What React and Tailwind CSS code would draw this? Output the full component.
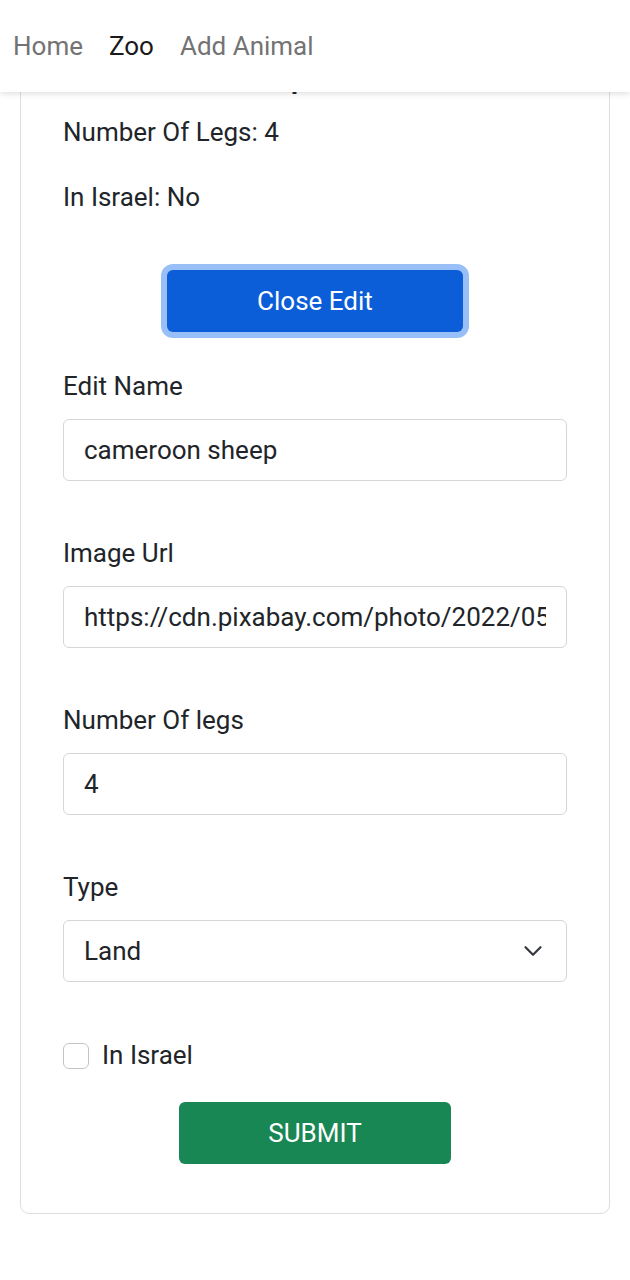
import { useState } from "react";

const fields = [
  { label: "Edit Name", value: "cameroon sheep" },
  { label: "Image Url", value: "https://cdn.pixabay.com/photo/2022/05/12/sheep-7191044_1280.jpg" },
  { label: "Number Of legs", value: "4" },
];

function NavBar() {
  const links = ["Home", "Zoo", "Add Animal"];
  return (
    <nav className="relative z-10 h-[92px] bg-white shadow-[0_2px_6px_rgba(0,0,0,0.12)] flex items-center">
      {links.map((l) => (
        <a
          key={l}
          href="#"
          className={`px-[13px] text-[26px] leading-none ${
            l === "Zoo" ? "text-[#1a1a1a]" : "text-[#737373]"
          }`}
        >
          {l}
        </a>
      ))}
    </nav>
  );
}

export default function App() {
  const [inIsrael, setInIsrael] = useState(false);

  return (
    <div className="min-h-screen bg-white text-[#212529]" style={{ fontFamily: "Roboto, 'Noto Sans', sans-serif" }}>
      <NavBar />

      <main className="-mt-[92px] pt-[16px] pb-[60px]">
        <div className="mx-[20px] border border-[#dedede] rounded-[9px] px-[42px] pt-[42px] pb-[49px]">
          {/* title sits behind the navbar, only the descender peeks out */}
          <h5 className="text-[33px] leading-none font-medium mb-[21px]">cameroon sheep</h5>

          <p className="text-[26px] leading-[39px] mb-[26px]">Number Of Legs: 4</p>
          <p className="text-[26px] leading-[39px]">In Israel: No</p>

          <div className="flex justify-center mt-[53px]">
            <button className="w-[296px] h-[62px] bg-[#0b5ed7] text-white text-[26px] rounded-[6px] ring-[6px] ring-[#98bff7]">
              Close Edit
            </button>
          </div>

          <form className="mt-[35px]">
            {fields.map((f) => (
              <div key={f.label} className="mb-[53px]">
                <label className="block text-[26px] leading-[39px] mb-[13px]">{f.label}</label>
                <input
                  defaultValue={f.value}
                  className="block w-full h-[62px] px-[20px] border-[1.5px] border-[#d6d6d6] rounded-[6px] text-[26px] text-[#212529] bg-white outline-none"
                />
              </div>
            ))}

            <div className="mb-[54px]">
              <label className="block text-[26px] leading-[39px] mb-[13px]">Type</label>
              <div className="relative">
                <select
                  defaultValue="Land"
                  className="block w-full h-[62px] px-[20px] border-[1.5px] border-[#d6d6d6] rounded-[6px] text-[26px] text-[#212529] bg-white appearance-none outline-none"
                >
                  <option>Land</option>
                  <option>Sea</option>
                  <option>Air</option>
                </select>
                <svg
                  className="absolute right-[24px] top-1/2 -translate-y-1/2 w-[20px] h-[20px] pointer-events-none"
                  viewBox="0 0 16 16"
                  fill="none"
                >
                  <path d="m2 5 6 6 6-6" stroke="#343a40" strokeWidth="1.8" strokeLinecap="round" strokeLinejoin="round" />
                </svg>
              </div>
            </div>

            <label className="flex items-center gap-[13px] text-[26px] leading-[39px]">
              <input
                type="checkbox"
                checked={inIsrael}
                onChange={() => setInIsrael(!inIsrael)}
                className="appearance-none w-[26px] h-[26px] border-[1.5px] border-[#c4c4c4] rounded-[6px] bg-white"
              />
              In Israel
            </label>

            <div className="flex justify-center mt-[27px]">
              <button
                type="button"
                className="w-[272px] h-[62px] bg-[#198754] text-white text-[26px] uppercase rounded-[6px]"
              >
                Submit
              </button>
            </div>
          </form>
        </div>
      </main>
    </div>
  );
}
